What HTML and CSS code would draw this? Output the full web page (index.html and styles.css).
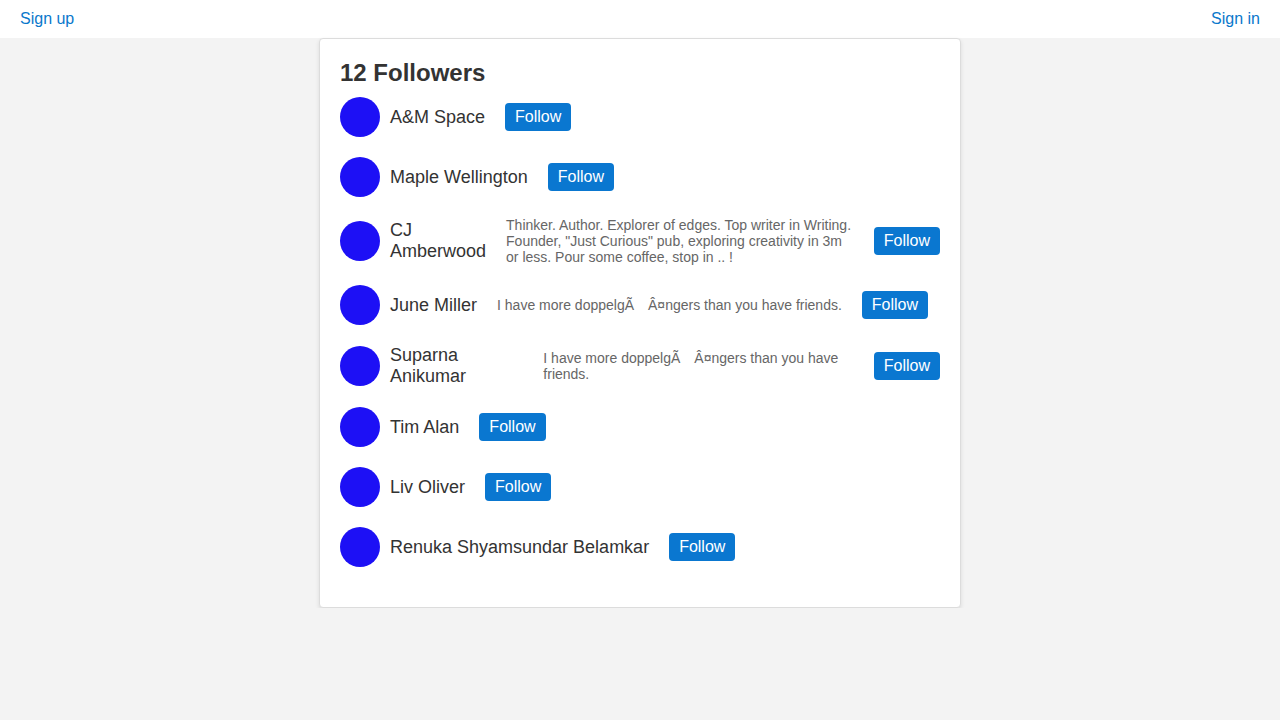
FILE: index.html
```html
<!DOCTYPE html>
<html lang="en">
<head>
<meta charset="utf-8">
<title>12 Followers</title>
<link rel="stylesheet" href="styles.css">
</head>
<body>
<header class="topbar">
  <a class="toplink" href="#">Sign up</a>
  <a class="toplink" href="#">Sign in</a>
</header>
<main class="card">
  <h1 class="title">12 Followers</h1>
  <div class="row">
    <div class="avatar"></div>
    <div class="name">A&amp;M Space</div>
    <button class="follow">Follow</button>
  </div>
  <div class="row">
    <div class="avatar"></div>
    <div class="name">Maple Wellington</div>
    <button class="follow">Follow</button>
  </div>
  <div class="row">
    <div class="avatar"></div>
    <div class="name">CJ Amberwood</div>
    <div class="bio">Thinker. Author. Explorer of edges. Top writer in Writing. Founder, "Just Curious" pub, exploring creativity in 3m or less. Pour some coffee, stop in .. !</div>
    <button class="follow">Follow</button>
  </div>
  <div class="row">
    <div class="avatar"></div>
    <div class="name">June Miller</div>
    <div class="bio">I have more doppelgÃ&emsp;Â¤ngers than you have friends.</div>
    <button class="follow">Follow</button>
  </div>
  <div class="row">
    <div class="avatar"></div>
    <div class="name">Suparna Anikumar</div>
    <div class="bio">I have more doppelgÃ&emsp;Â¤ngers than you have friends.</div>
    <button class="follow">Follow</button>
  </div>
  <div class="row">
    <div class="avatar"></div>
    <div class="name">Tim Alan</div>
    <button class="follow">Follow</button>
  </div>
  <div class="row">
    <div class="avatar"></div>
    <div class="name">Liv Oliver</div>
    <button class="follow">Follow</button>
  </div>
  <div class="row">
    <div class="avatar"></div>
    <div class="name">Renuka Shyamsundar Belamkar</div>
    <button class="follow">Follow</button>
  </div>
</main>
</body>
</html>
```
FILE: styles.css
```css
html, body {
  margin: 0;
  padding: 0;
}
body {
  background: #f3f3f3;
  font-family: "Liberation Sans", Arial, Helvetica, sans-serif;
  color: #333;
}
.topbar {
  height: 38px;
  background: #fff;
  display: flex;
  align-items: center;
  justify-content: space-between;
  padding: 0 20px;
}
.toplink {
  color: #0a78cc;
  text-decoration: none;
  font-size: 16px;
}
.card {
  width: 600px;
  margin: 0 auto;
  background: #fff;
  border: 1px solid #dcdcdc;
  border-radius: 4px;
  box-shadow: 0 2px 4px rgba(0, 0, 0, 0.1);
  padding: 20px;
}
.title {
  margin: 0 0 10px;
  font-size: 24px;
  line-height: 28px;
  font-weight: bold;
  color: #333;
}
.row {
  display: flex;
  align-items: center;
  margin-bottom: 20px;
}
.avatar {
  width: 40px;
  height: 40px;
  flex-shrink: 0;
  border-radius: 50%;
  background: #1d10f5;
}
.name {
  margin-left: 10px;
  margin-right: 20px;
  font-size: 18px;
  color: #333;
}
.bio {
  margin-right: 20px;
  font-size: 14px;
  color: #666;
}
.follow {
  flex-shrink: 0;
  font-family: inherit;
  font-size: 16px;
  line-height: 18px;
  color: #fff;
  background: #0a77d0;
  border: none;
  border-radius: 4px;
  padding: 5px 10px;
  cursor: pointer;
}
```
